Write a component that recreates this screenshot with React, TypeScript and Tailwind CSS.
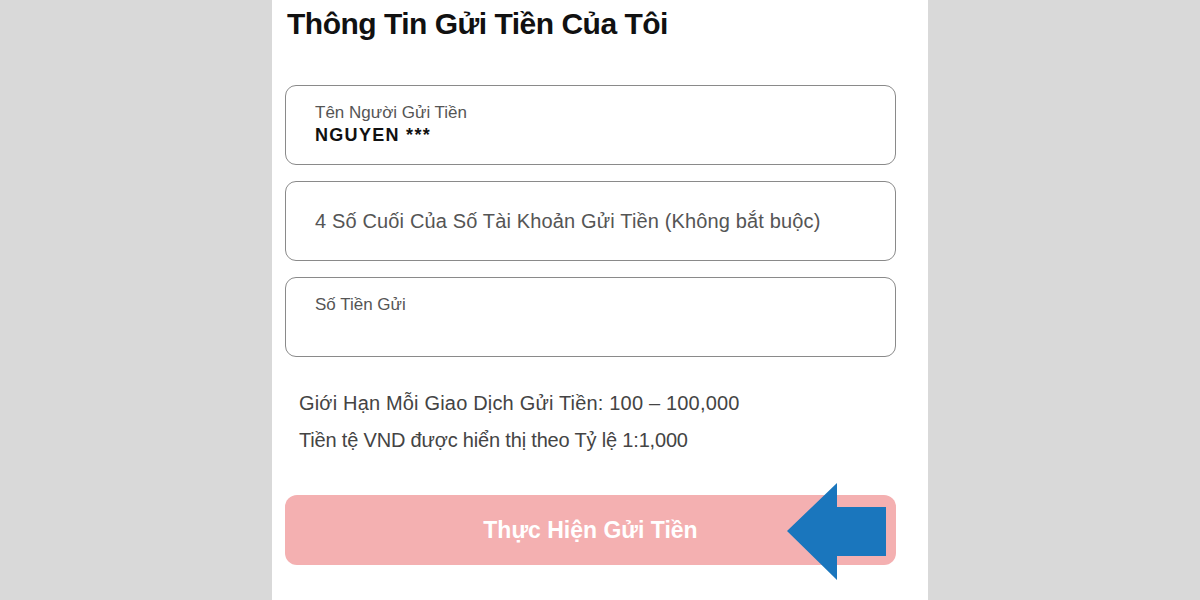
export default function App() {
  const font = { fontFamily: '"Liberation Sans", Arial, sans-serif' };
  return (
    <div className="w-[1200px] h-[600px] bg-[#d9d9d9] overflow-hidden" style={font}>
      <div className="w-[656px] h-full mx-auto bg-white pl-[13px] pr-[32px] flex flex-col">
        <h1 className="mt-[4px] ml-[2px] h-[40px] text-[30px] leading-[40px] font-bold text-[#111] tracking-[-0.5px]">
          Thông Tin Gửi Tiền Của Tôi
        </h1>

        <div className="mt-[41px] h-[80px] rounded-[11px] border border-[#8a8a8a] pl-[29px] pt-[17px]">
          <div className="text-[17px] leading-[19px] text-[#555]">Tên Người Gửi Tiền</div>
          <div className="mt-[3px] text-[18px] leading-[21px] font-bold text-[#111] tracking-[1.3px]">NGUYEN ***</div>
        </div>

        <div className="mt-[16px] h-[80px] rounded-[11px] border border-[#8a8a8a] pl-[29px] flex items-center">
          <span className="text-[20px] text-[#555] tracking-[0.15px]">
            4 Số Cuối Của Số Tài Khoản Gửi Tiền (Không bắt buộc)
          </span>
        </div>

        <div className="mt-[16px] h-[80px] rounded-[11px] border border-[#8a8a8a] pl-[29px] pt-[17px]">
          <div className="text-[17px] leading-[19px] text-[#555]">Số Tiền Gửi</div>
        </div>

        <div className="mt-[33px] pl-[14px] text-[20px] text-[#444]">
          <p className="leading-[26px] tracking-[0.18px]">Giới Hạn Mỗi Giao Dịch Gửi Tiền: 100 – 100,000</p>
          <p className="mt-[11px] leading-[26px] tracking-[-0.18px]">Tiền tệ VND được hiển thị theo Tỷ lệ 1:1,000</p>
        </div>

        <div className="relative mt-[42px] h-[70px] rounded-[12px] bg-[#f4b0b1] flex items-center justify-center">
          <span className="text-[23px] font-bold text-white">Thực Hiện Gửi Tiền</span>
          <svg
            className="absolute left-[502px] top-[-12px]"
            width="100"
            height="98"
            viewBox="0 0 100 98"
          >
            <polygon points="0,48 50,0 50,24 99,24 99,73 50,73 50,97" fill="#1a76bd" />
          </svg>
        </div>
      </div>
    </div>
  );
}
